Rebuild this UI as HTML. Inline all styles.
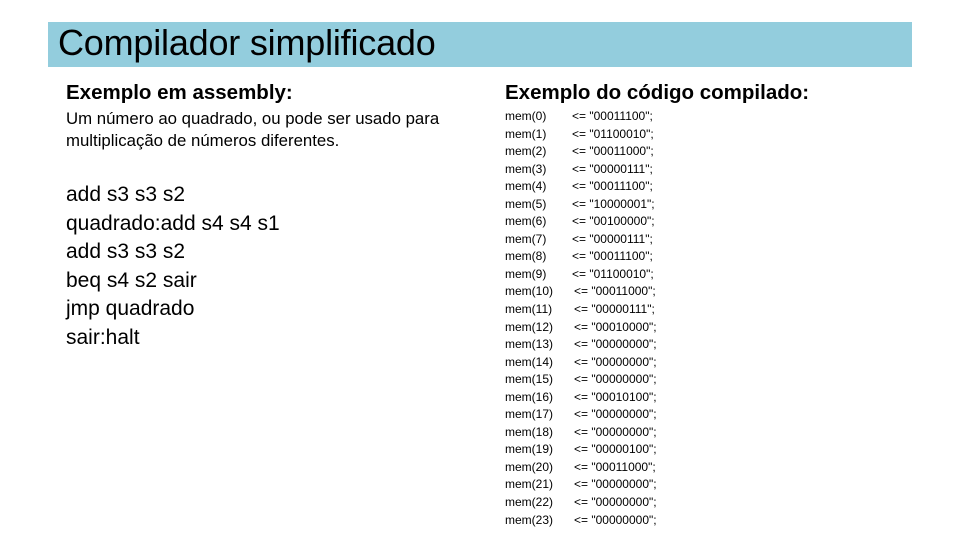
<!DOCTYPE html>
<html><head><meta charset="utf-8"><style>
body{margin:0;width:960px;height:540px;background:#fff;position:relative;font-family:"Liberation Sans",sans-serif;color:#000;overflow:hidden}
.ban{position:absolute;left:48px;top:22px;width:864px;height:45px;background:#93cddd}
.ban span{position:absolute;left:10px;top:0px;font-size:36px;letter-spacing:-0.2px;white-space:nowrap}
.a{position:absolute;white-space:nowrap}
.mem{position:absolute;left:505px;font-size:12px;line-height:17.55px;top:108px;width:300px}
.mem div{position:relative;height:17.55px;white-space:nowrap}
.mem b{font-weight:normal;position:absolute;left:67px;white-space:nowrap}
.mem b.w{left:69px}
</style></head><body>
<div class="ban"><span>Compilador simplificado</span></div>
<div class="a" style="left:66px;top:81px;font-size:20.5px;font-weight:bold">Exemplo em assembly:</div>
<div class="a" style="left:66px;top:108px;font-size:16.8px;line-height:22px">Um número ao quadrado, ou pode ser usado para<br>multiplicação de números diferentes.</div>
<div class="a" style="left:66px;top:181px;font-size:21px;line-height:28.6px">add s3 s3 s2<br>quadrado:add s4 s4 s1<br>add s3 s3 s2<br>beq s4 s2 sair<br>jmp quadrado<br>sair:halt</div>
<div class="a" style="left:505px;top:81px;font-size:20.5px;font-weight:bold">Exemplo do código compilado:</div>
<div class="mem">
<div>mem(0)<b>&lt;= "00011100";</b></div>
<div>mem(1)<b>&lt;= "01100010";</b></div>
<div>mem(2)<b>&lt;= "00011000";</b></div>
<div>mem(3)<b>&lt;= "00000111";</b></div>
<div>mem(4)<b>&lt;= "00011100";</b></div>
<div>mem(5)<b>&lt;= "10000001";</b></div>
<div>mem(6)<b>&lt;= "00100000";</b></div>
<div>mem(7)<b>&lt;= "00000111";</b></div>
<div>mem(8)<b>&lt;= "00011100";</b></div>
<div>mem(9)<b>&lt;= "01100010";</b></div>
<div>mem(10)<b class="w">&lt;= "00011000";</b></div>
<div>mem(11)<b class="w">&lt;= "00000111";</b></div>
<div>mem(12)<b class="w">&lt;= "00010000";</b></div>
<div>mem(13)<b class="w">&lt;= "00000000";</b></div>
<div>mem(14)<b class="w">&lt;= "00000000";</b></div>
<div>mem(15)<b class="w">&lt;= "00000000";</b></div>
<div>mem(16)<b class="w">&lt;= "00010100";</b></div>
<div>mem(17)<b class="w">&lt;= "00000000";</b></div>
<div>mem(18)<b class="w">&lt;= "00000000";</b></div>
<div>mem(19)<b class="w">&lt;= "00000100";</b></div>
<div>mem(20)<b class="w">&lt;= "00011000";</b></div>
<div>mem(21)<b class="w">&lt;= "00000000";</b></div>
<div>mem(22)<b class="w">&lt;= "00000000";</b></div>
<div>mem(23)<b class="w">&lt;= "00000000";</b></div>
</div>
</body></html>
